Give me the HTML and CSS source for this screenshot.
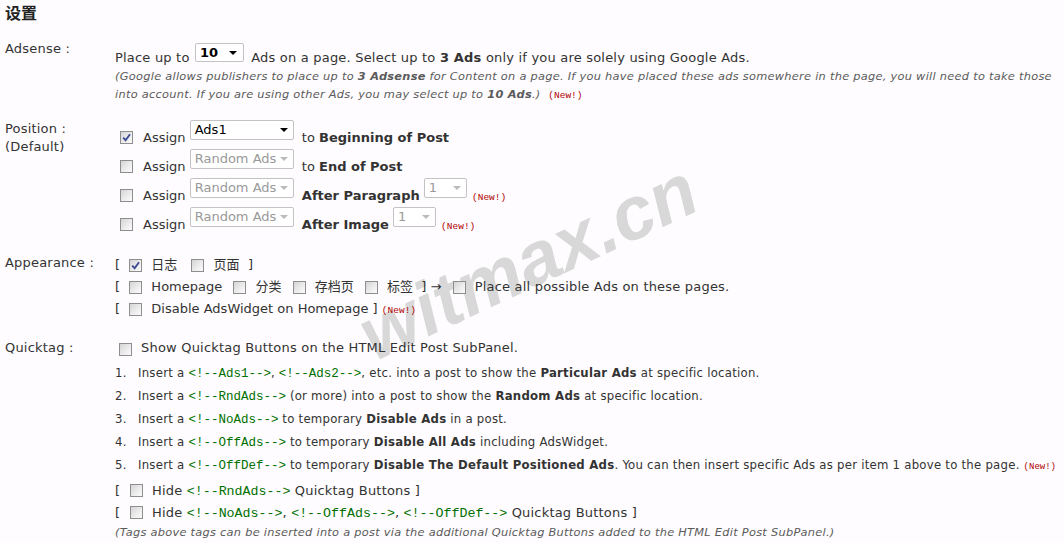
FILE: index.html
```html
<!DOCTYPE html>
<html>
<head>
<meta charset="utf-8">
<title>设置</title>
<link rel="stylesheet" href="styles.css">
</head>
<body>
<div class="wm">witmax.cn</div>
<div class="page">
  <h2 class="title">设置</h2>

  <div class="section s-adsense">
    <div class="label">Adsense :</div>
    <div class="content">
      <div class="sel-line">Place up to <span class="sel sel-num"><span class="sel-in"><b>10</b><i class="arr"></i></span></span> Ads on a page. Select up to <b>3 Ads</b> only if you are solely using Google Ads.</div>
      <p class="note">(Google allows publishers to place up to <b>3 Adsense</b> for Content on a page. If you have placed these ads somewhere in the page, you will need to take those into account. If you are using other Ads, you may select up to <b>10 Ads</b>.)&nbsp; <span class="new">(New!)</span></p>
    </div>
  </div>

  <div class="section s-pos">
    <div class="label">Position :<br>(Default)</div>
    <div class="content">
      <div class="prow"><span class="cb cb-p on"><svg viewBox="0 0 11 11"><path d="M2.2 5.6 L4.6 8.2 L9 2.2"/></svg></span>Assign <span class="sel sel-ads"><span class="sel-in"><span>Ads1</span><i class="arr"></i></span></span> to <b>Beginning of Post</b></div>
      <div class="prow"><span class="cb cb-p"></span>Assign <span class="sel sel-ads dis"><span class="sel-in"><span>Random Ads</span><i class="arr"></i></span></span> to <b>End of Post</b></div>
      <div class="prow"><span class="cb cb-p"></span>Assign <span class="sel sel-ads dis"><span class="sel-in"><span>Random Ads</span><i class="arr"></i></span></span> <b>After Paragraph</b> <span class="sel sel-one dis"><span class="sel-in"><span>1</span><i class="arr"></i></span></span> <span class="new">(New!)</span></div>
      <div class="prow"><span class="cb cb-p"></span>Assign <span class="sel sel-ads dis"><span class="sel-in"><span>Random Ads</span><i class="arr"></i></span></span> <b>After Image</b> <span class="sel sel-one dis"><span class="sel-in"><span>1</span><i class="arr"></i></span></span> <span class="new">(New!)</span></div>
    </div>
  </div>

  <div class="section s-app">
    <div class="label">Appearance :</div>
    <div class="content">
      <div class="arow">[ <span class="cb on"><svg viewBox="0 0 11 11"><path d="M2.2 5.6 L4.6 8.2 L9 2.2"/></svg></span> 日志 <span class="cb cb-wide"></span> 页面&nbsp; ]</div>
      <div class="arow">[ <span class="cb"></span> Homepage <span class="cb cb-gap"></span> 分类 <span class="cb cb-gap"></span> 存档页 <span class="cb cb-gap"></span> 标签&nbsp; ] → <span class="cb cb-gap"></span> <span class="wide">Place all possible Ads on these pages.</span></div>
      <div class="arow">[ <span class="cb"></span> Disable AdsWidget on Homepage ] <span class="new">(New!)</span></div>
    </div>
  </div>

  <div class="section s-qt">
    <div class="label">Quicktag :</div>
    <div class="content">
      <div class="qrow"><span class="cb cb-q"></span>Show Quicktag Buttons on the HTML Edit Post SubPanel.</div>
      <ol class="qlist">
        <li><span class="num">1.</span>Insert a <code>&lt;!--Ads1--&gt;</code>, <code>&lt;!--Ads2--&gt;</code>, etc. into a post to show the <b>Particular Ads</b> at specific location.</li>
        <li><span class="num">2.</span>Insert a <code>&lt;!--RndAds--&gt;</code> (or more) into a post to show the <b>Random Ads</b> at specific location.</li>
        <li><span class="num">3.</span>Insert a <code>&lt;!--NoAds--&gt;</code> to temporary <b>Disable Ads</b> in a post.</li>
        <li><span class="num">4.</span>Insert a <code>&lt;!--OffAds--&gt;</code> to temporary <b>Disable All Ads</b> including AdsWidget.</li>
        <li><span class="num">5.</span>Insert a <code>&lt;!--OffDef--&gt;</code> to temporary <b>Disable The Default Positioned Ads</b>. You can then insert specific Ads as per item 1 above to the page. <span class="new new-s">(New!)</span></li>
      </ol>
      <div class="hrow hrow-first">[ <span class="cb cb-h"></span> Hide <code>&lt;!--RndAds--&gt;</code> Quicktag Buttons ]</div>
      <div class="hrow">[ <span class="cb cb-h"></span> Hide <code>&lt;!--NoAds--&gt;</code>, <code>&lt;!--OffAds--&gt;</code>, <code>&lt;!--OffDef--&gt;</code> Quicktag Buttons ]</div>
      <p class="note note-last">(Tags above tags can be inserted into a post via the additional Quicktag Buttons added to the HTML Edit Post SubPanel.)</p>
    </div>
  </div>
</div>
</body>
</html>
```

FILE: styles.css
```css
html, body {
  margin: 0;
  padding: 0;
}
body {
  background: #fefcfe;
  color: #333;
  font-family: "DejaVu Sans", "Noto Sans CJK SC", sans-serif;
  font-size: 13px;
  line-height: 18px;
  letter-spacing: 0.2px;
}
.page {
  padding: 0 0 0 5px;
}
.wm {
  position: absolute;
  left: 528px;
  top: 262px;
  transform: translate(-50%, -50%) rotate(-25deg);
  font-family: "Liberation Sans", sans-serif;
  font-weight: bold;
  font-style: italic;
  font-size: 75px;
  line-height: 1;
  letter-spacing: 0;
  color: #d8d8d8;
  white-space: nowrap;
  z-index: -1;
}
.title {
  margin: 0;
  padding-top: 2px;
  height: 20px;
  font-family: "Noto Sans CJK SC", sans-serif;
  font-weight: bold;
  font-size: 16px;
  line-height: 20px;
  letter-spacing: 0;
  color: #222;
}
.section {
  display: grid;
  grid-template-columns: 110px 1fr;
}
.label {
  line-height: 18px;
}
b {
  font-weight: bold;
}

/* selects */
.sel {
  display: inline-block;
  overflow: hidden;
  box-sizing: border-box;
  height: 20px;
  border: 1px solid #c3c3c3;
  border-radius: 2px;
  background: #fff;
  color: #000;
  letter-spacing: 0;
  vertical-align: 2px;
}
.sel-in {
  display: flex;
  align-items: center;
  justify-content: space-between;
  height: 100%;
  padding: 0 5px 0 4px;
  line-height: 16px;
}
.arr {
  display: block;
  width: 0;
  height: 0;
  border-left: 4px solid transparent;
  border-right: 4px solid transparent;
  border-top: 4px solid #000;
}
.sel.dis {
  color: #999;
}
.sel.dis .arr {
  border-top-color: #bbb;
}
.sel-num {
  width: 49px;
  height: 19px;
  margin-left: 1px;
  margin-right: 3px;
  vertical-align: 0;
}
.sel-num .sel-in {
  padding-right: 6px;
}
.sel-ads {
  width: 104px;
  margin-left: 0;
  margin-right: 4px;
}
.sel-one {
  width: 43px;
  margin-right: 1px;
}

/* checkboxes */
.cb {
  display: inline-block;
  box-sizing: border-box;
  width: 13px;
  height: 13px;
  border: 1px solid #8e8e8e;
  background: linear-gradient(135deg, #d4d4d4 0%, #ececec 55%, #fbfbfb 100%);
  margin: 0 5px;
  vertical-align: -3px;
}
.cb svg {
  display: block;
  width: 11px;
  height: 11px;
}
.cb svg path {
  fill: none;
  stroke: #3f4c95;
  stroke-width: 1.9;
}
.cb-gap {
  margin-left: 7px;
}
.cb-wide {
  margin-left: 10px;
}
.cb-p {
  margin: 0 10px 0 5px;
  vertical-align: -2px;
}
.cb-q {
  margin: 0 9px 0 4px;
  vertical-align: -4px;
}
.cb-h {
  vertical-align: -2px;
}

/* new markers */
.new {
  font-family: "Liberation Mono", monospace;
  font-size: 9.5px;
  line-height: 10px;
  letter-spacing: 0;
  color: #b00000;
  font-style: normal;
}
.new-s {
  font-size: 9px;
}

/* adsense */
.s-adsense {
  margin-top: 18px;
}
.sel-line {
  padding-top: 3px;
}
.note {
  margin: 0;
  font-size: 11.35px;
  line-height: 18px;
  letter-spacing: 0.28px;
  font-style: italic;
  color: #5a5a5a;
}

/* position */
.s-pos {
  margin-top: 17px;
}
.prow {
  height: 29px;
  white-space: nowrap;
  letter-spacing: 0;
}

/* appearance */
.s-app {
  margin-top: 17.5px;
}
.arow {
  line-height: 22px;
  white-space: nowrap;
  letter-spacing: 0;
}
.wide {
  letter-spacing: 0.2px;
}

/* quicktag */
.s-qt {
  margin-top: 17.5px;
}
.s-qt .label {
  padding-top: 1.5px;
}
.qrow {
  line-height: 22px;
}
.qlist {
  list-style: none;
  margin: 1.5px 0 0;
  padding: 0;
  font-family: "DejaVu Sans Condensed", "DejaVu Sans", sans-serif;
  line-height: 23px;
  letter-spacing: 0.25px;
}
.qlist li {
  height: 23px;
  white-space: nowrap;
}
.num {
  display: inline-block;
  width: 23px;
}
code {
  font-family: "Liberation Mono", monospace;
  font-size: 12.5px;
  line-height: 12px;
  letter-spacing: 0;
  color: #007000;
}
.hrow {
  height: 22px;
  line-height: 22px;
  white-space: nowrap;
}
.hrow code {
  font-size: 13.3px;
}
.hrow-first {
  margin-top: 4px;
}
.note-last {
  line-height: 16px;
}
```
